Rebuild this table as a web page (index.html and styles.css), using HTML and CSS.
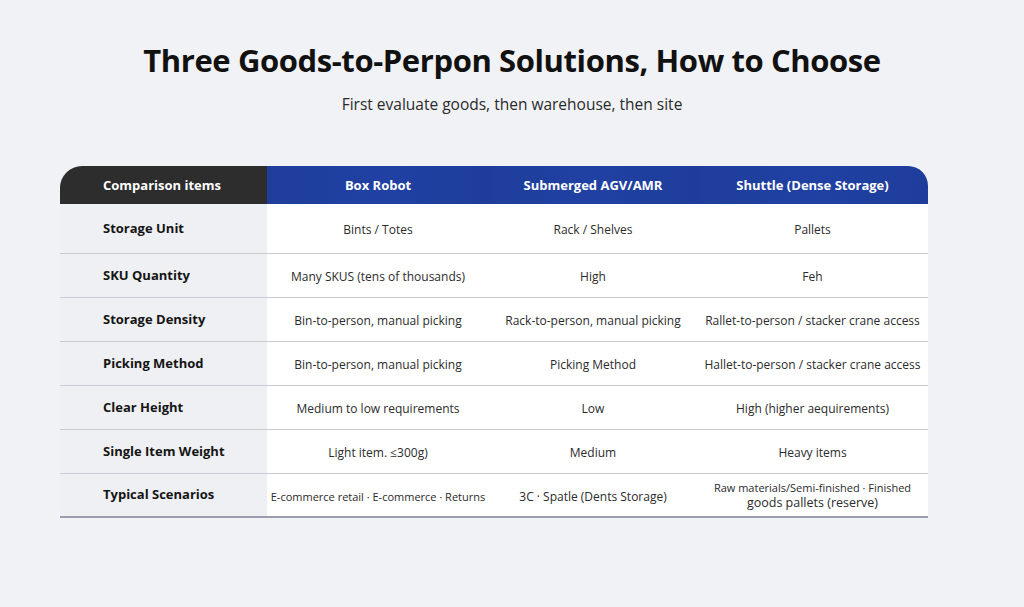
FILE: index.html
```html
<!DOCTYPE html>
<html lang="en">
<head>
<meta charset="utf-8">
<title>Three Goods-to-Perpon Solutions</title>
<link rel="stylesheet" href="styles.css">
</head>
<body>
<main class="page">
  <h1 class="title">Three Goods-to-Perpon Solutions, How to Choose</h1>
  <p class="subtitle">First evaluate goods, then warehouse, then site</p>
  <div class="table">
    <div class="hd hd-first">Comparison items</div>
    <div class="hd hd-blue">Box Robot</div>
    <div class="hd hd-blue">Submerged AGV/AMR</div>
    <div class="hd hd-blue hd-last">Shuttle (Dense Storage)</div>

    <div class="lbl r1">Storage Unit</div>
    <div class="cell r1">Bints / Totes</div>
    <div class="cell r1">Rack / Shelves</div>
    <div class="cell r1">Pallets</div>

    <div class="lbl">SKU Quantity</div>
    <div class="cell">Many SKUS (tens of thousands)</div>
    <div class="cell">High</div>
    <div class="cell">Feh</div>

    <div class="lbl">Storage Density</div>
    <div class="cell">Bin-to-person, manual picking</div>
    <div class="cell">Rack-to-person, manual picking</div>
    <div class="cell">Rallet-to-person / stacker crane access</div>

    <div class="lbl">Picking Method</div>
    <div class="cell">Bin-to-person, manual picking</div>
    <div class="cell">Picking Method</div>
    <div class="cell">Hallet-to-person / stacker crane access</div>

    <div class="lbl">Clear Height</div>
    <div class="cell">Medium to low requirements</div>
    <div class="cell">Low</div>
    <div class="cell">High (higher aequirements)</div>

    <div class="lbl">Single Item Weight</div>
    <div class="cell">Light item. ≤300g)</div>
    <div class="cell">Medium</div>
    <div class="cell">Heavy items</div>

    <div class="lbl last">Typical Scenarios</div>
    <div class="cell last small">E-commerce retail · E-commerce · Returns</div>
    <div class="cell last">3C · Spatle (Dents Storage)</div>
    <div class="cell last two"><span class="l1">Raw materials/Semi-finished · Finished</span><span class="l2">goods pallets (reserve)</span></div>
  </div>
</main>
</body>
</html>
```

FILE: styles.css
```css
html, body {
  margin: 0;
  padding: 0;
}
body {
  background: #f1f2f5;
  font-family: "Open Sans", "Noto Sans", sans-serif;
  color: #222;
  width: 1024px;
  height: 607px;
  overflow: hidden;
}
.page {
  padding-top: 40px;
}
.title {
  margin: 0;
  text-align: center;
  font-family: "Open Sans", sans-serif;
  font-weight: 700;
  font-size: 31px;
  line-height: 40px;
  letter-spacing: -0.4px;
  color: #111;
}
.subtitle {
  margin: 14px 0 0;
  text-align: center;
  font-size: 15.5px;
  line-height: 20px;
  color: #2a2a2a;
}
.table {
  margin: 52px 0 0 60px;
  width: 868px;
  display: grid;
  grid-template-columns: 207px 222px 208px 231px;
  grid-template-rows: 38px 50px repeat(6, 44px);
}
.hd {
  display: flex;
  align-items: center;
  justify-content: center;
  font-weight: 700;
  font-size: 13px;
  color: #fff;
}
.hd-first {
  background: #2d2d2d;
  border-top-left-radius: 22px;
  justify-content: flex-start;
  padding-left: 43px;
}
.hd-blue {
  background: linear-gradient(90deg, #1f3e9c, #2041a3 50%, #1e3d9b);
}
.hd-last {
  border-top-right-radius: 20px;
}
.lbl {
  display: flex;
  align-items: center;
  padding-left: 43px;
  padding-bottom: 2px;
  font-weight: 700;
  font-size: 13px;
  color: #151515;
  background: #eff0f3;
  border-bottom: 1px solid #c9cad3;
}
.cell {
  display: flex;
  align-items: center;
  justify-content: center;
  text-align: center;
  font-size: 12px;
  color: #2b2b2b;
  background: #fff;
  border-bottom: 1px solid #c9cad3;
  padding-top: 2px;
}
.r1 {
  padding-top: 2px;
  padding-bottom: 0;
}
.lbl.r1 {
  padding-top: 0;
  padding-bottom: 2px;
}
.last {
  border-bottom: 2px solid #9c9eae;
}
.small {
  font-size: 11px;
}
.two {
  flex-direction: column;
  line-height: 15px;
  padding-top: 0;
}
.two .l1 {
  font-size: 11px;
}
.two .l2 {
  font-size: 12.5px;
}
```
